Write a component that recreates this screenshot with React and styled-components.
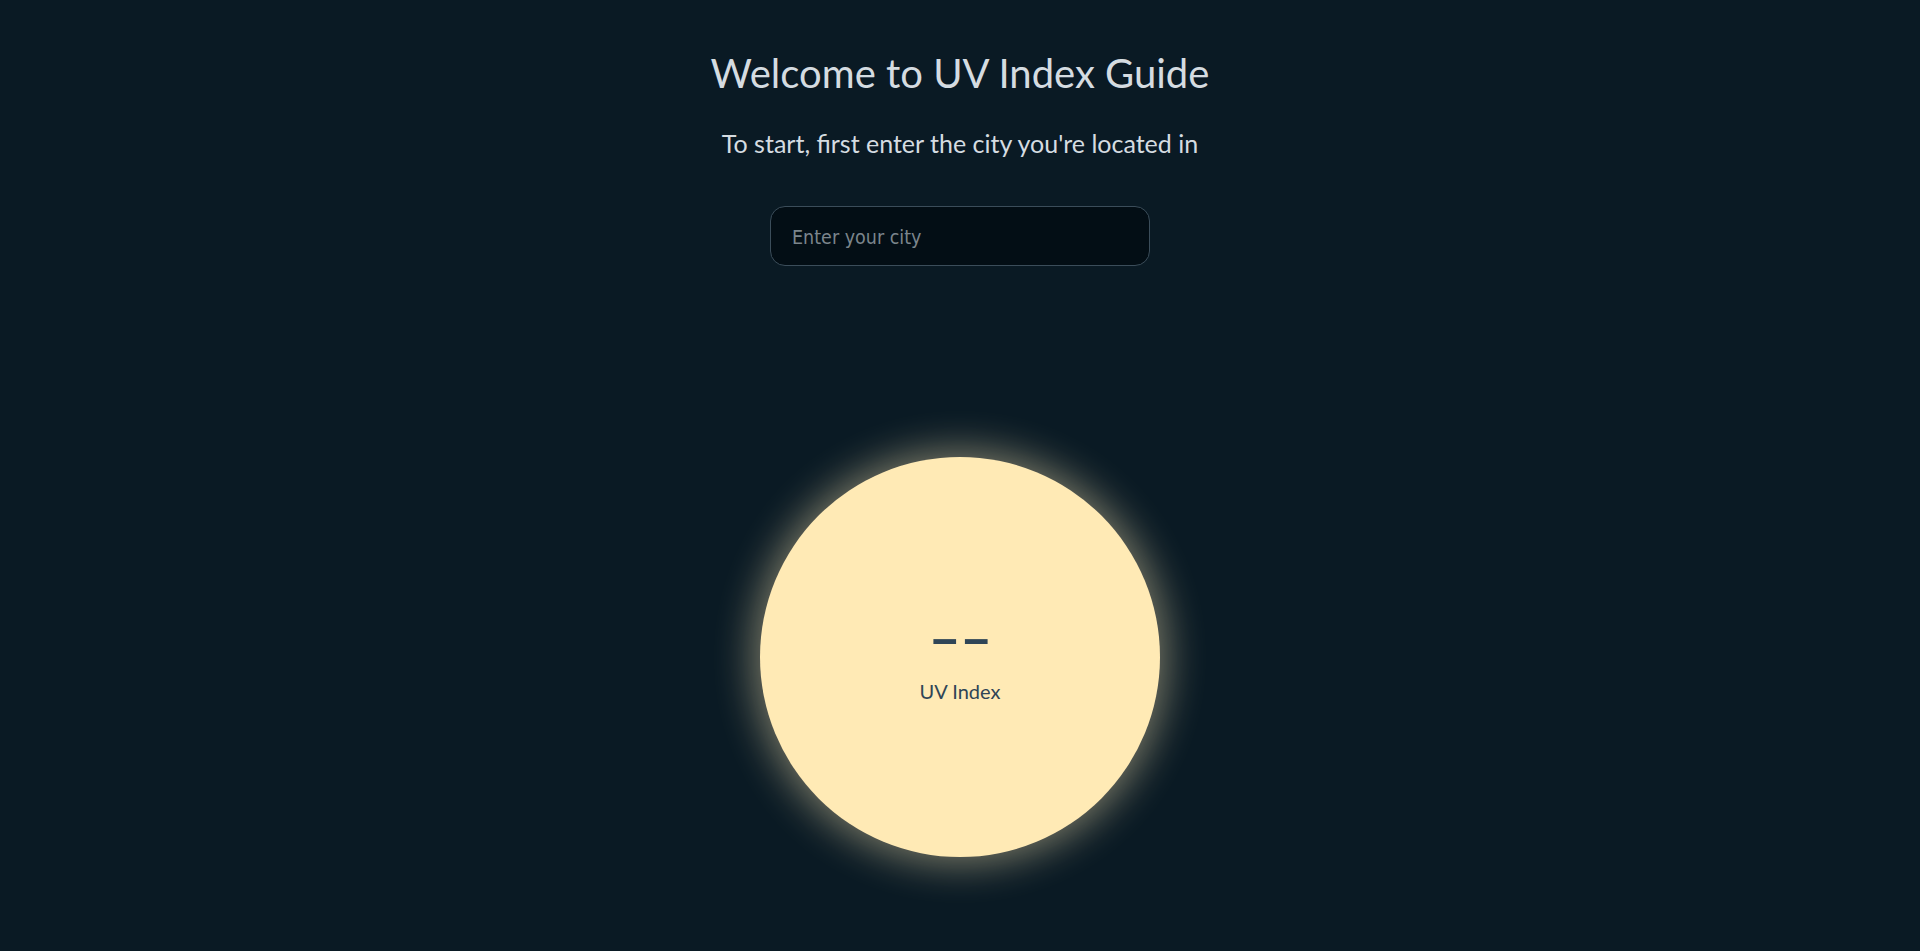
import styled, { createGlobalStyle } from "styled-components";

const GlobalStyle = createGlobalStyle`
  html, body {
    margin: 0;
    padding: 0;
    background: #0a1a24;
  }
  body {
    font-family: Lato, "Open Sans", sans-serif;
  }
  ::-webkit-scrollbar {
    width: 5px;
  }
  ::-webkit-scrollbar-track {
    background: #0a1a24;
  }
  ::-webkit-scrollbar-thumb {
    background: #9c9c9c;
    border-right: 3px solid #0a1a24;
    background-clip: padding-box;
  }
`;

const Page = styled.main`
  display: flex;
  flex-direction: column;
  align-items: center;
  padding: 49px 0 650px;
  color: #d5dce1;
`;

const Title = styled.h1`
  margin: 0;
  font-size: 40px;
  line-height: 48px;
  font-weight: 400;
`;

const Subtitle = styled.p`
  margin: 31px 0 0;
  font-size: 25px;
  line-height: 30px;
  font-weight: 400;
`;

const CityInput = styled.input`
  box-sizing: border-box;
  margin-top: 48px;
  width: 380px;
  height: 60px;
  padding: 2px 21px 0;
  border: 1px solid #3b4d5a;
  border-radius: 15px;
  background: #030e15;
  color: #d5dce1;
  font-family: "DejaVu Sans Condensed", "DejaVu Sans", sans-serif;
  font-size: 19.5px;
  outline: none;

  &::placeholder {
    color: #7b858c;
  }
`;

const Sun = styled.div`
  box-sizing: border-box;
  margin-top: 191px;
  width: 400px;
  height: 400px;
  padding-top: 8px;
  border-radius: 50%;
  background: #ffeab5;
  box-shadow: 0 0 40px 6px rgba(255, 234, 181, 0.48);
  display: flex;
  flex-direction: column;
  align-items: center;
  justify-content: center;
  color: #2f4556;
`;

const Value = styled.div`
  font-size: 56px;
  font-weight: 700;
  line-height: 48px;
  letter-spacing: -1px;
  margin-top: -6px;
`;

const Label = styled.div`
  margin-top: 18px;
  font-size: 20px;
  line-height: 24px;
`;

export default function App() {
  return (
    <>
      <GlobalStyle />
      <Page>
        <Title>Welcome to UV Index Guide</Title>
        <Subtitle>To start, first enter the city you're located in</Subtitle>
        <CityInput type="text" placeholder="Enter your city" />
        <Sun>
          <Value>––</Value>
          <Label>UV Index</Label>
        </Sun>
      </Page>
    </>
  );
}
